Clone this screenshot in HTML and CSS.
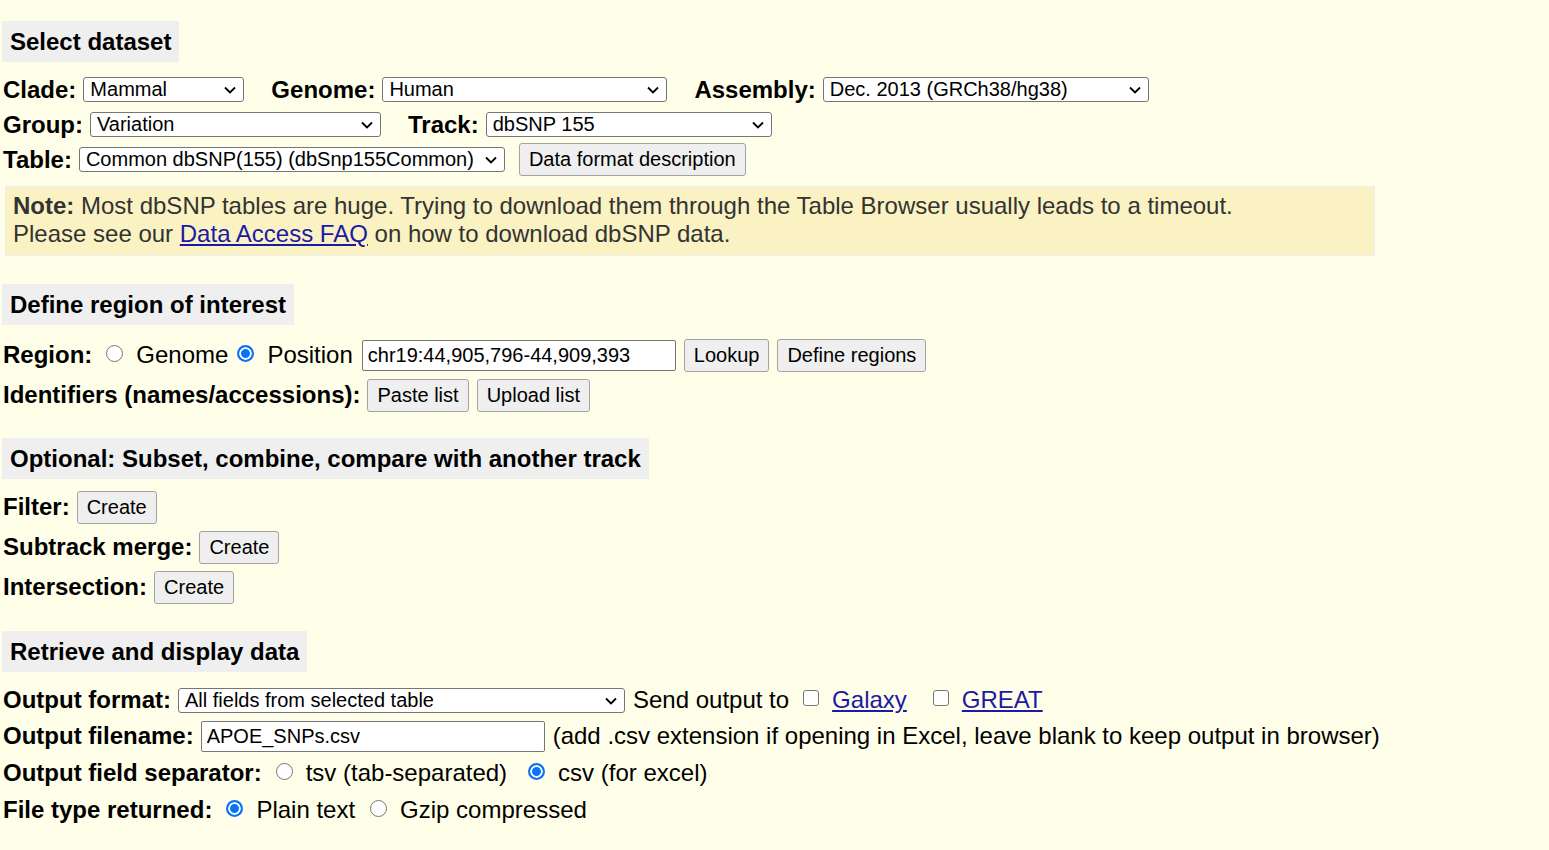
FILE: index.html
```html
<!DOCTYPE html>
<html lang="en">
<head>
    <meta charset="UTF-8">
    <title>Table Browser</title>
    <link rel="stylesheet" href="styles.css">
</head>
<body>
    <form class="tb-form">
        <!-- Select dataset -->
        <div class="section-title first">Select dataset</div>
        <div class="row">
            <span class="label">Clade:</span>
            <span class="sel-wrap"><select class="sel w-clade"><option>Mammal</option></select><svg class="chev" viewBox="0 0 12 8"><path d="M1 1.5 6 6.5 11 1.5"/></svg></span>
            <span class="label gap-l">Genome:</span>
            <span class="sel-wrap"><select class="sel w-genome"><option>Human</option></select><svg class="chev" viewBox="0 0 12 8"><path d="M1 1.5 6 6.5 11 1.5"/></svg></span>
            <span class="label gap-l">Assembly:</span>
            <span class="sel-wrap"><select class="sel w-assembly"><option>Dec. 2013 (GRCh38/hg38)</option></select><svg class="chev" viewBox="0 0 12 8"><path d="M1 1.5 6 6.5 11 1.5"/></svg></span>
        </div>
        <div class="row">
            <span class="label">Group:</span>
            <span class="sel-wrap"><select class="sel w-group"><option>Variation</option></select><svg class="chev" viewBox="0 0 12 8"><path d="M1 1.5 6 6.5 11 1.5"/></svg></span>
            <span class="label gap-l">Track:</span>
            <span class="sel-wrap"><select class="sel w-track"><option>dbSNP 155</option></select><svg class="chev" viewBox="0 0 12 8"><path d="M1 1.5 6 6.5 11 1.5"/></svg></span>
        </div>
        <div class="row">
            <span class="label">Table:</span>
            <span class="sel-wrap"><select class="sel w-table"><option>Common dbSNP(155) (dbSnp155Common)</option></select><svg class="chev" viewBox="0 0 12 8"><path d="M1 1.5 6 6.5 11 1.5"/></svg></span>
            <button type="button" class="btn gap-m">Data format description</button>
        </div>
        <div class="note">
            <b>Note:</b> Most dbSNP tables are huge. Trying to download them through the Table Browser usually leads to a timeout.<br>
            Please see our <a href="#">Data Access FAQ</a> on how to download dbSNP data.
        </div>

        <!-- Define region -->
        <div class="section-title sec2">Define region of interest</div>
        <div class="row tall">
            <span class="label">Region:</span>
            <input type="radio" name="region" class="radio r-first">
            <span class="opt">Genome</span>
            <input type="radio" name="region" class="radio" checked>
            <span class="opt">Position</span>
            <input type="text" class="txt w-pos" value="chr19:44,905,796-44,909,393">
            <button type="button" class="btn">Lookup</button>
            <button type="button" class="btn">Define regions</button>
        </div>
        <div class="row tall">
            <span class="label">Identifiers (names/accessions):</span>
            <button type="button" class="btn">Paste list</button>
            <button type="button" class="btn">Upload list</button>
        </div>

        <!-- Optional -->
        <div class="section-title sec3">Optional: Subset, combine, compare with another track</div>
        <div class="row tall">
            <span class="label">Filter:</span>
            <button type="button" class="btn">Create</button>
        </div>
        <div class="row tall">
            <span class="label">Subtrack merge:</span>
            <button type="button" class="btn">Create</button>
        </div>
        <div class="row tall">
            <span class="label">Intersection:</span>
            <button type="button" class="btn">Create</button>
        </div>

        <!-- Retrieve -->
        <div class="section-title sec4">Retrieve and display data</div>
        <div class="row r-36">
            <span class="label">Output format:</span>
            <span class="sel-wrap"><select class="sel w-format"><option>All fields from selected table</option></select><svg class="chev" viewBox="0 0 12 8"><path d="M1 1.5 6 6.5 11 1.5"/></svg></span>
            <span class="plain">Send output to</span>
            <input type="checkbox" class="check">
            <a href="#" class="out-link">Galaxy</a>
            <input type="checkbox" class="check c-second">
            <a href="#" class="out-link">GREAT</a>
        </div>
        <div class="row r-36">
            <span class="label">Output filename:</span>
            <input type="text" class="txt w-file" value="APOE_SNPs.csv">
            <span class="hint">(add .csv extension if opening in Excel, leave blank to keep output in browser)</span>
        </div>
        <div class="row r-38">
            <span class="label">Output field separator:</span>
            <input type="radio" name="sep" class="radio r-first">
            <span class="opt">tsv (tab-separated)</span>
            <input type="radio" name="sep" class="radio r-wide" checked>
            <span class="opt">csv (for excel)</span>
        </div>
        <div class="row r-36">
            <span class="label">File type returned:</span>
            <input type="radio" name="ftype" class="radio r-first" checked>
            <span class="opt">Plain text</span>
            <input type="radio" name="ftype" class="radio r-gz">
            <span class="opt">Gzip compressed</span>
        </div>
    </form>
</body>
</html>
```

FILE: styles.css
```css
body {
    margin: 0;
    padding: 0 0 0 2px;
    background-color: #fffee8;
    font-family: "Liberation Sans", Arial, sans-serif;
    font-size: 24px;
    color: #000;
}
.tb-form {
    margin: 0;
}
.section-title {
    display: inline-block;
    height: 41px;
    line-height: 42px;
    padding: 0 8px;
    background-color: #efefef;
    font-weight: bold;
    font-size: 24px;
}
.section-title.first { margin-top: 21px; margin-bottom: 10px; }
.section-title.sec2 { margin-top: 28px; margin-bottom: 10px; }
.section-title.sec3 { margin-top: 23px; margin-bottom: 8px; }
.section-title.sec4 { margin-top: 24px; margin-bottom: 10px; }
.row {
    display: flex;
    align-items: center;
    height: 35px;
    white-space: nowrap;
    padding-left: 1px;
}
.row.tall { height: 40px; }
.row.r-36 { height: 36px; }
.row.r-38 { height: 38px; }
.label {
    font-weight: bold;
    margin-right: 7px;
}
.gap-l { margin-left: 27px; }
.gap-m { margin-left: 14px; }
.sel-wrap {
    position: relative;
    display: inline-flex;
}
.sel {
    appearance: none;
    -webkit-appearance: none;
    height: 25px;
    font-family: "Liberation Sans", Arial, sans-serif;
    font-size: 20px;
    line-height: 23px;
    color: #000;
    background-color: #fff;
    border: 1px solid #767676;
    border-radius: 3px;
    padding: 0 24px 0 6px;
}
.chev {
    position: absolute;
    right: 8px;
    top: 9px;
    width: 12px;
    height: 8px;
    fill: none;
    stroke: #000;
    stroke-width: 1.8;
    pointer-events: none;
}
.w-clade { width: 161px; }
.w-genome { width: 285px; }
.w-assembly { width: 326px; }
.w-group { width: 291px; }
.w-track { width: 286px; }
.w-table { width: 426px; }
.w-format { width: 447px; }
.btn {
    height: 33px;
    padding: 0 9px;
    margin-right: 8px;
    font-family: "Liberation Sans", Arial, sans-serif;
    font-size: 20px;
    color: #000;
    background-color: #efefef;
    border: 1px solid #a3a3a3;
    border-radius: 3px;
}
.txt {
    height: 31px;
    box-sizing: border-box;
    padding: 0 5px;
    margin: 0 8px 0 0;
    font-family: "Liberation Sans", Arial, sans-serif;
    font-size: 20px;
    color: #000;
    background-color: #fff;
    border: 1px solid #767676;
    border-radius: 2px;
}
.w-pos { width: 314px; }
.w-file { width: 344px; }
.radio {
    appearance: none;
    -webkit-appearance: none;
    box-sizing: border-box;
    width: 17px;
    height: 17px;
    margin: 0 13px 0 0;
    border: 1px solid #767676;
    border-radius: 50%;
    background-color: #fff;
    position: relative;
    top: -2px;
}
.radio:checked {
    border: 2px solid #0b73f5;
    background-color: #0b73f5;
    box-shadow: inset 0 0 0 2px #fff;
}
.radio.r-first { margin-left: 7px; }
.radio.r-wide { margin-left: 12px; }
.radio.r-gz { margin-left: 6px; }
.opt {
    margin-right: 9px;
}
.plain {
    margin-left: 8px;
    margin-right: 14px;
}
.hint {
    margin-left: 0;
}
.check {
    appearance: none;
    -webkit-appearance: none;
    box-sizing: border-box;
    width: 16px;
    height: 16px;
    margin: 0 13px 0 0;
    border: 1.5px solid #767676;
    border-radius: 3px;
    background-color: #fff;
    position: relative;
    top: -2px;
}
.check.c-second { margin-left: 26px; }
.out-link,
.note a {
    color: #1a1aa6;
}
.note {
    width: 1370px;
    height: 70px;
    box-sizing: border-box;
    margin: 9px 0 0 3px;
    padding: 5px 7px;
    background-color: #faf2c2;
    border: 1px solid #eeeeee;
    color: #333;
    font-size: 24px;
    line-height: 28px;
}
```
